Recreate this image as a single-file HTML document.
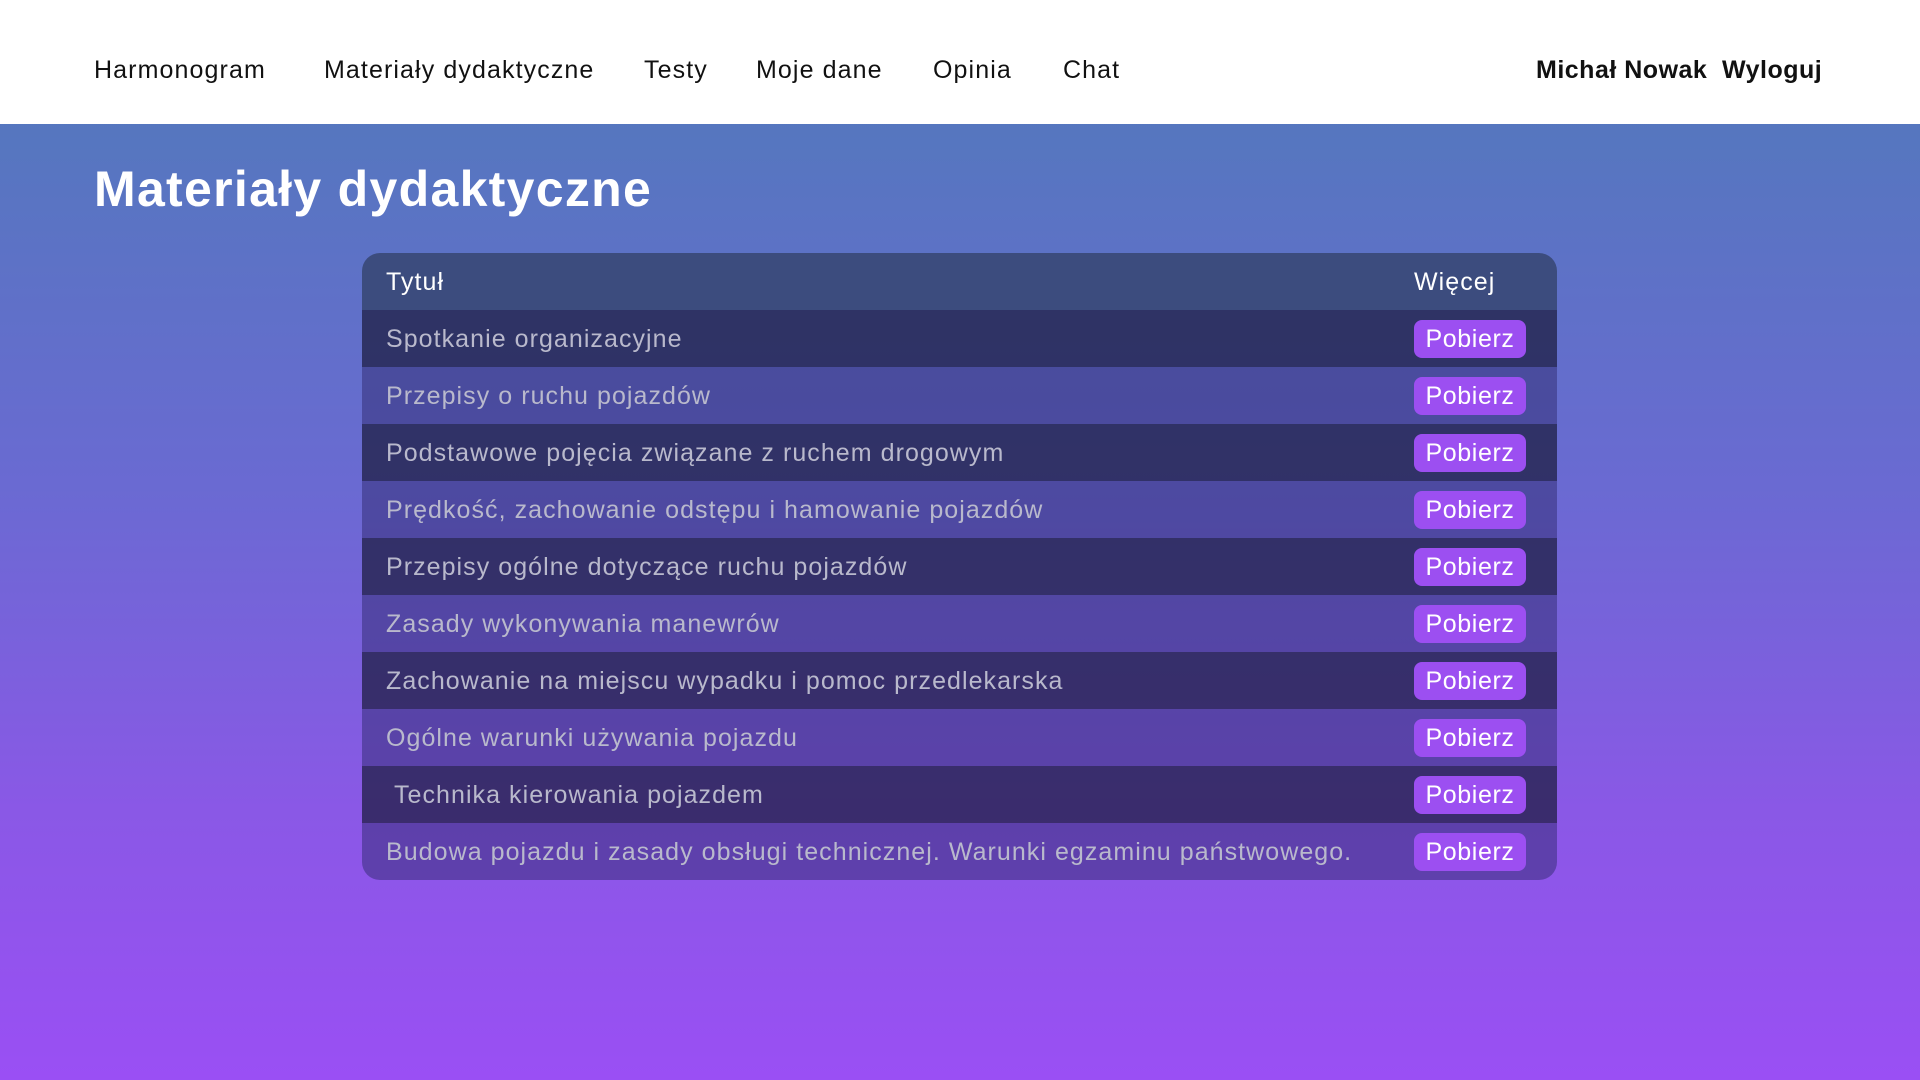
<!DOCTYPE html>
<html><head><meta charset="utf-8"><style>
*{margin:0;padding:0;box-sizing:border-box}
body{width:1920px;height:1080px;overflow:hidden;font-family:"Liberation Sans",sans-serif;background:linear-gradient(180deg,#4e7bb8 0%,#6a6ad2 45%,#8a58e6 75%,#9a4ff4 100%)}
.top{position:absolute;left:0;top:0;width:1920px;height:124px;background:#fff}
.nav{position:absolute;top:56px;font-size:25px;color:#111;letter-spacing:1.1px}
.user{position:absolute;top:56px;font-size:25px;font-weight:bold;color:#111;letter-spacing:0.5px}
h1{position:absolute;left:94px;top:160px;font-size:50px;color:#fff;font-weight:bold;letter-spacing:1.3px}
.tbl{position:absolute;left:362px;top:253px;width:1195px;height:627px;border-radius:18px;overflow:hidden}
.row{height:57px;position:relative;font-size:25px;letter-spacing:1.05px;color:#b9b9cc}
.row span{position:absolute;left:24px;top:15px}
.hd{background:#3c4c7e;color:#fff}
.hd .w{left:1052px}
.d{background:rgba(28,28,62,0.72)}
.l{background:rgba(48,42,112,0.5)}
.btn{position:absolute;left:1052px;top:10px;width:112px;height:38px;background:#9c4ff1;border-radius:8px;color:#fff;font-size:25px;text-align:center;line-height:38px;letter-spacing:0.6px}
</style></head><body>
<div class="top">
<div class="nav" style="left:94px">Harmonogram</div>
<div class="nav" style="left:324px">Materiały dydaktyczne</div>
<div class="nav" style="left:644px">Testy</div>
<div class="nav" style="left:756px">Moje dane</div>
<div class="nav" style="left:933px">Opinia</div>
<div class="nav" style="left:1063px">Chat</div>
<div class="user" style="left:1536px">Michał Nowak</div>
<div class="user" style="left:1722px">Wyloguj</div>
</div>
<h1>Materiały dydaktyczne</h1>
<div class="tbl">
<div class="row hd"><span>Tytuł</span><span class="w">Więcej</span></div>
<div class="row d"><span>Spotkanie organizacyjne</span><div class="btn">Pobierz</div></div>
<div class="row l"><span>Przepisy o ruchu pojazdów</span><div class="btn">Pobierz</div></div>
<div class="row d"><span>Podstawowe pojęcia związane z ruchem drogowym</span><div class="btn">Pobierz</div></div>
<div class="row l"><span>Prędkość, zachowanie odstępu i hamowanie pojazdów</span><div class="btn">Pobierz</div></div>
<div class="row d"><span>Przepisy ogólne dotyczące ruchu pojazdów</span><div class="btn">Pobierz</div></div>
<div class="row l"><span>Zasady wykonywania manewrów</span><div class="btn">Pobierz</div></div>
<div class="row d"><span>Zachowanie na miejscu wypadku i pomoc przedlekarska</span><div class="btn">Pobierz</div></div>
<div class="row l"><span>Ogólne warunki używania pojazdu</span><div class="btn">Pobierz</div></div>
<div class="row d"><span>&nbsp;Technika kierowania pojazdem</span><div class="btn">Pobierz</div></div>
<div class="row l"><span>Budowa pojazdu i zasady obsługi technicznej. Warunki egzaminu państwowego.</span><div class="btn">Pobierz</div></div>
</div>
</body></html>
